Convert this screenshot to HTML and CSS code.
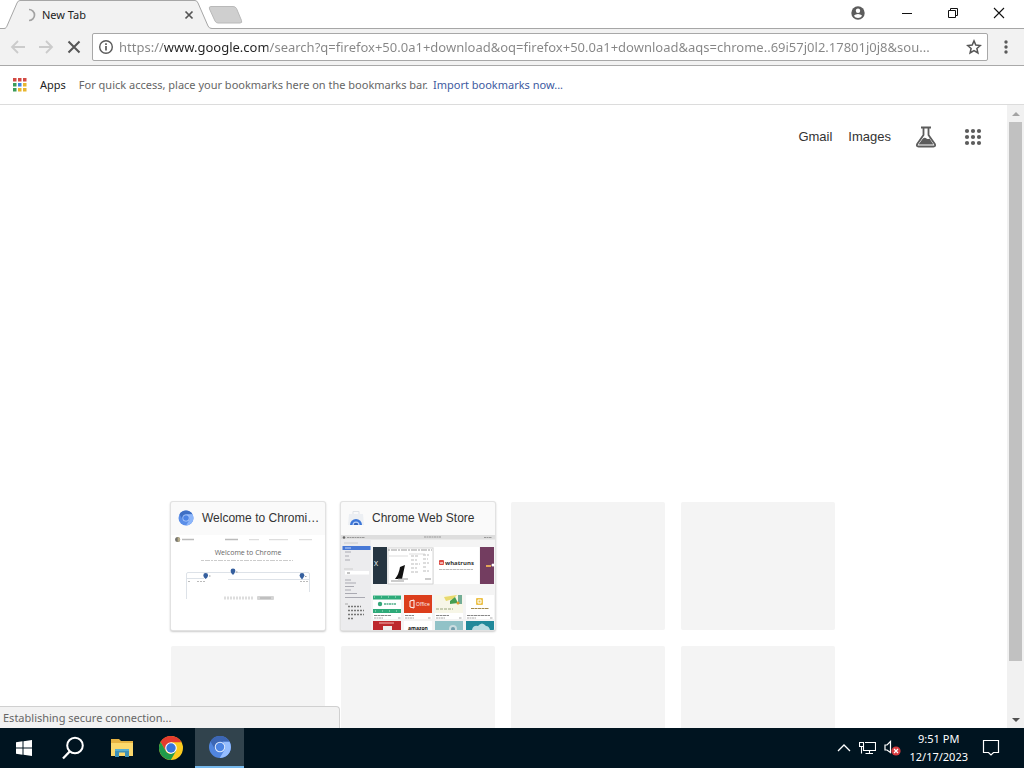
FILE: index.html
```html
<!DOCTYPE html>
<html lang="en">
<head>
<meta charset="utf-8">
<title>New Tab</title>
<link rel="stylesheet" href="styles.css">
</head>
<body>
<header class="tabstrip">
  <div class="tab">
    <svg class="tab-shape" width="208" height="29" viewBox="0 0 208 29" aria-hidden="true"><path d="M0 28.5C2 28.5 2.500 27 3 26L13 3Q14 .5 16 .5H191Q193 .5 194 3L204 26Q205 28.500 208 28.500V29H0Z" fill="#f2f2f2"/><path d="M0 28.500C2 28.500 2.500 27 3 26L13 3Q14 .5 16 .5H191Q193 .5 194 3L204 26Q205 28.500 208 28.500" fill="none" stroke="#a6a6a6"/></svg>
    <svg class="spinner" width="14" height="14" viewBox="0 0 14 14" aria-hidden="true"><path d="M6 1.500A5.500 5.500 0 0 1 6 12.500" fill="none" stroke="#a3a3a3" stroke-width="1.700"/></svg>
    <span class="tab-title">New Tab</span>
    <button class="plain tab-close" aria-label="Close tab"><svg width="10" height="10" viewBox="0 0 10 10"><path d="M1.500 1.500l7 7M8.500 1.500l-7 7" stroke="#555" stroke-width="1.700"/></svg></button>
  </div>
  <button class="plain new-tab" aria-label="New tab"><svg width="36" height="18" viewBox="0 0 36 18"><path d="M3 .5H25Q27.500 .5 28.500 2.500L33.500 14.500Q34.500 17 32 17H10Q8 17 7 15L1.500 3Q.5 .5 3 .5Z" fill="#cfcfcf" stroke="#b9b9b9"/></svg></button>
  <div class="window-controls">
    <button class="plain profile" aria-label="Profile"><svg width="14" height="14" viewBox="0 0 14 14"><circle cx="7" cy="7" r="6.700" fill="#5c5c5c"/><circle cx="7" cy="4.700" r="2.200" fill="#fff"/><path d="M2.800 9.700Q4.500 8 7 8T11.200 9.700Q9.700 12 7 12T2.800 9.700Z" fill="#fff"/></svg></button>
    <button class="plain control" aria-label="Minimize"><svg width="12" height="12" viewBox="0 0 12 12"><path d="M1 6.500H11" stroke="#111"/></svg></button>
    <button class="plain control" aria-label="Restore"><svg width="12" height="12" viewBox="0 0 12 12"><path d="M1.500 3.500H8.500V10.500H1.500ZM3.500 3.500V1.500H10.500V8.500H8.500" fill="none" stroke="#111"/></svg></button>
    <button class="plain control" aria-label="Close"><svg width="12" height="12" viewBox="0 0 12 12"><path d="M1 1L11 11M11 1L1 11" stroke="#111" stroke-width="1.100"/></svg></button>
  </div>
</header>

<nav class="toolbar" aria-label="Navigation">
  <button class="plain nav" aria-label="Back"><svg width="16" height="16" viewBox="0 0 16 16"><path d="M15 8H2.500M8 2L2 8L8 14" fill="none" stroke="#cbcbcb" stroke-width="1.800"/></svg></button>
  <button class="plain nav" aria-label="Forward"><svg width="16" height="16" viewBox="0 0 16 16"><path d="M1 8H13.500M8 2L14 8L8 14" fill="none" stroke="#cbcbcb" stroke-width="1.800"/></svg></button>
  <button class="plain nav" aria-label="Stop"><svg width="16" height="16" viewBox="0 0 16 16"><path d="M2.500 2.500L13.500 13.500M13.500 2.500L2.500 13.500" stroke="#555" stroke-width="2"/></svg></button>
  <div class="omnibox">
    <button class="plain" aria-label="Site information"><svg width="16" height="16" viewBox="0 0 16 16"><circle cx="8" cy="8" r="6.300" fill="none" stroke="#5a5a5a" stroke-width="1.400"/><path d="M8 7V11.500M8 4.300V6" stroke="#5a5a5a" stroke-width="1.700"/></svg></button>
    <input class="url" type="text" aria-label="Address" value="https://www.google.com/search?q=firefox+50.0a1+download&amp;oq=firefox+50.0a1+download&amp;aqs=chrome..69i57j0l2.17801j0j8&amp;sou...">
    <button class="plain" aria-label="Bookmark this page"><svg width="16" height="16" viewBox="0 0 16 16"><path d="M8 1.900L9.800 6.100L14.300 6.500L10.900 9.500L11.900 14L8 11.600L4.100 14L5.100 9.500L1.700 6.500L6.200 6.100Z" fill="none" stroke="#555" stroke-width="1.500"/></svg></button>
  </div>
  <button class="plain menu" aria-label="Menu"><svg width="4" height="14" viewBox="0 0 4 14"><g fill="#5a5a5a"><circle cx="2" cy="2" r="1.700"/><circle cx="2" cy="7" r="1.700"/><circle cx="2" cy="12" r="1.700"/></g></svg></button>
</nav>

<nav class="bookmarks" aria-label="Bookmarks">
  <a class="apps" href="#apps"><svg width="14" height="14" viewBox="0 0 14 14" aria-hidden="true"><path d="M0 0h3.500v3.500h-3.500zM5 0h3.500v3.500h-3.500zM10 0h3.500v3.500h-3.500z" fill="#d34a43"/><path d="M0 5h3.500v3.500h-3.500zM0 10h3.500v3.500h-3.500z" fill="#3b9b59"/><path d="M5 5h3.500v3.500h-3.500z" fill="#3f83dd"/><path d="M10 5h3.500v3.500h-3.500zM5 10h3.500v3.500h-3.500zM10 10h3.500v3.500h-3.500z" fill="#e8b52e"/></svg><span>Apps</span></a>
  <span class="hint">For quick access, place your bookmarks here on the bookmarks bar.</span>
  <a class="import" href="#import">Import bookmarks now...</a>
</nav>

<div class="viewport">
  <main class="page">
    <div class="google-bar">
      <a href="#gmail">Gmail</a>
      <a href="#images">Images</a>
      <button class="plain labs" aria-label="Labs"><svg width="22" height="22" viewBox="0 0 22 22"><path d="M6 1.500H16M8.500 2V9L2.200 18Q1 20.500 3.500 20.500H18.500Q21 20.500 19.800 18L13.500 9V2" fill="none" stroke="#5c5c5c" stroke-width="1.800"/><path d="M7.500 13Q9.500 11 11.500 12.500Q13 13.500 14.500 12.500L18.500 18.500H3.500Z" fill="#5c5c5c"/></svg></button>
      <button class="plain" aria-label="Google apps"><svg width="18" height="18" viewBox="0 0 18 18"><g fill="#5c5c5c"><circle cx="3" cy="3" r="2.100"/><circle cx="9" cy="3" r="2.100"/><circle cx="15" cy="3" r="2.100"/><circle cx="3" cy="9" r="2.100"/><circle cx="9" cy="9" r="2.100"/><circle cx="15" cy="9" r="2.100"/><circle cx="3" cy="15" r="2.100"/><circle cx="9" cy="15" r="2.100"/><circle cx="15" cy="15" r="2.100"/></g></svg></button>
    </div>
    <div class="tiles">
      <a class="tile site" href="#welcome">
        <span class="tile-head"><svg width="16" height="16" viewBox="0 0 16 16" aria-hidden="true"><circle cx="8" cy="8" r="7.500" fill="#5a8ee8"/><path d="M1.500 4.300A7.500 7.500 0 0 1 14.500 4.300H8A4 4 0 0 0 4.500 9.500Z" fill="#3e6fc4"/><path d="M14.500 4.300A7.500 7.500 0 0 1 8 15.500L11.500 9.800Q12.300 6 8 4.300Z" fill="#8db6fa"/><circle cx="8" cy="8" r="3.500" fill="#b5cffb"/><circle cx="8" cy="8" r="2.800" fill="#4b83e4"/></svg><span class="tile-title">Welcome to Chromi…</span></span>
        <svg class="thumb" viewBox="0 0 154 95" aria-hidden="true">
          <rect width="154" height="95" fill="#fff"/>
          <circle cx="6.600" cy="4.600" r="2.500" fill="#74736d"/><path d="M6.600 2.100A2.500 2.500 0 0 1 6.600 7.100Z" fill="#b7ad8a"/>
          <path d="M11 4.600H23" stroke="#bbb" stroke-width="1.500"/><path d="M54 4.600H67" stroke="#bbb" stroke-width="1.500"/><path d="M78 4.600H88M98 4.600H117M128 4.600H141" stroke="#ddd" stroke-width="1.300"/>
          <text x="77" y="20" text-anchor="middle" font-size="7" fill="#666">Welcome to Chrome</text>
          <path d="M30 25.500H122" stroke="#ccc" stroke-width="1" stroke-dasharray="3 1 5 1 2 1"/>
          <path d="M15.500 64V39Q15.500 37.500 17 37.500H60M64 37.500H137Q138.500 37.500 138.500 39V57M15.500 43.500H33M57 44.500H138" fill="none" stroke="#dde2e8"/>
          <path d="M17 46.500H20M26 46.500H34M129 46.500H137" stroke="#bbb" stroke-dasharray="2 1"/>
          <g fill="#355f9e"><path d="M32.300 40.500a2.400 2.400 0 1 1 4.800 0Q37 42 34.700 44Q32.300 42 32.300 40.500Z"/><path d="M59.600 36a2.400 2.400 0 1 1 4.800 0Q64 38 62 40Q59.600 38 59.600 36Z"/><path d="M128.600 40.500a2.400 2.400 0 1 1 4.800 0Q133 42 131 44.500Q128.600 42 128.600 40.500Z"/></g>
          <path d="M38 41H39.500M65 37H66.500M134 41.500H135.500" stroke="#999"/>
          <path d="M53 63H83" stroke="#ddd" stroke-width="3" stroke-dasharray="2 1"/><rect x="86" y="61" width="17" height="4" rx="1" fill="#d5d5d5"/><path d="M89 63H100" stroke="#aaa"/>
        </svg>
      </a>
      <a class="tile site" href="#store">
        <span class="tile-head"><svg width="16" height="16" viewBox="0 0 16 16" aria-hidden="true"><path d="M1 4H15L16 15H0Z" fill="#eceff3"/><path d="M5 4V1.500H11V4" fill="none" stroke="#dfe3e8"/><path d="M2 15A6 6 0 0 1 14 15Z" fill="#3c76d8"/><path d="M4.500 15A3.500 3.500 0 0 1 11.500 15Z" fill="#bed4fa"/><path d="M5.700 15A2.300 2.300 0 0 1 10.300 15Z" fill="#3264bd"/></svg><span class="tile-title">Chrome Web Store</span></span>
        <svg class="thumb" viewBox="0 0 154 95" aria-hidden="true">
          <rect width="154" height="95" fill="#f4f4f4"/><rect width="154" height="4.500" fill="#dedede"/>
          <circle cx="3" cy="2.500" r="1.300" fill="#666"/><path d="M6 2.500H24M83 2H100M143 2.500H151" stroke="#999" stroke-dasharray="2 .5"/>
          <rect y="4.500" width="30" height="90.500" fill="#ececee"/><path d="M3 8H17M3 34H12" stroke="#ccc"/>
          <rect x="1.500" y="11" width="28" height="4" fill="#4778d6"/><path d="M4 13H10" stroke="#c4d6fb"/>
          <path d="M4 17H10M4 21H8M4 25H9M4 45H10" stroke="#aaaab2"/><rect x="4" y="36" width="24" height="3.500" fill="#fff"/><path d="M6 38H9" stroke="#888"/>
          <path d="M4 48H15M4 51.500H13M4 55H10M4 58.500H16M4 62.500H24" stroke="#aaaab2"/><path d="M4 69H7" stroke="#aaa"/>
          <path d="M7 71.500H20M7 75.500H23M7 79.500H23M7 83.500H12" stroke="#777" stroke-width="1.500" stroke-dasharray="2 1"/>
          <rect x="32" y="12" width="14" height="37" fill="#263541"/><text x="33" y="31" font-size="7" fill="#fff">X</text>
          <rect x="47" y="13" width="45" height="36" fill="#fff" stroke="#c7c7c7" stroke-width=".7"/><path d="M47 15H91" stroke="#999" stroke-dasharray="2 1 6 1"/><path d="M48 21H67M68 19H84" stroke="#ddd"/>
          <path d="M70 21H78M70 25H76M70 29H79M70 33H76M70 37H78M82 20H88M82 24H87M82 28H88M82 32H86M82 36H88" stroke="#bbb" stroke-dasharray="3 1"/>
          <path d="M59 32L64 30L61 44H54Q58 39 59 32Z" fill="#111"/><path d="M57 44H67M50 46H63M84 44H90" stroke="#999"/>
          <rect x="93" y="12" width="45" height="37" fill="#fff"/><rect x="98" y="25" width="5" height="5" rx="1" fill="#db4740"/><path d="M99 27L100 29L101 27L102 29" fill="none" stroke="#fff" stroke-width=".7"/><text x="104" y="30" font-size="6" font-weight="700" fill="#333">whatruns</text><path d="M98 34.500H132" stroke="#bbb" stroke-dasharray="3 .5"/>
          <rect x="139" y="12" width="14" height="37" fill="#733d60"/><path d="M145 31H150" stroke="#e2a457" stroke-width="2"/><circle cx="152" cy="30" r="1.500" fill="#fff"/>
          <g fill="#fff"><rect x="32" y="60" width="28" height="24"/><rect x="63" y="60" width="28" height="24"/><rect x="94" y="60" width="28" height="24"/><rect x="125" y="60" width="28" height="24"/></g>
          <path d="M32 62.500H60M32 76H60" stroke="#2eaa79" stroke-width="4"/><path d="M33 62H59M34 76H60" stroke="#b3e5ce" stroke-dasharray="1 6"/><circle cx="39" cy="69" r="2.200" fill="#35a77a"/><path d="M43 69H55" stroke="#4fae88" stroke-width="1.500" stroke-dasharray="2 .5"/>
          <rect x="63" y="60" width="28" height="18" fill="#dc3e1c"/><path d="M69 66L73 65V73L69 72Z" fill="none" stroke="#fff"/><text x="75" y="71" font-size="5" fill="#fff">Office</text>
          <rect x="94" y="60" width="28" height="18" fill="#f7f6e7"/><path d="M103 62L116 60L112 64L105 66Z" fill="#e8d96d"/><path d="M109 69V66L114 62L117 68Z" fill="#459e52"/><rect x="117" y="60" width="4" height="9" fill="#73ad96"/><path d="M95 74H112" stroke="#9aa67d" stroke-dasharray="3 1"/><circle cx="117" cy="68" r="1.500" fill="#e49b2c"/>
          <rect x="135" y="63" width="7" height="7" rx="1" fill="#edc24b"/><path d="M137 65H140V68H137Z" fill="none" stroke="#fff"/><path d="M130 73.500H148" stroke="#a48a4a" stroke-dasharray="3 .5"/>
          <path d="M33 80.500H50M64 80.500H73M95 80.500H108M126 80.500H149" stroke="#888" stroke-dasharray="3 .5"/><path d="M33 83H42M57 83H60M64 83H73M87 83H90M95 83H104M118 83H121M126 83H135M149 83H152" stroke="#aaa" stroke-dasharray="2 .5"/>
          <rect x="32" y="86" width="28" height="9" fill="#bd292d"/><path d="M38 88H53" stroke="#f3b5b0"/><rect x="42" y="91" width="9" height="4" fill="#eee"/>
          <rect x="63" y="86" width="28" height="9" fill="#fff"/><text x="67" y="95" font-size="5" font-weight="700" fill="#111">amazon</text>
          <rect x="94" y="86" width="28" height="9" fill="#91c2c7"/><circle cx="112" cy="94" r="4" fill="#cbdde0"/><circle cx="112" cy="94" r="2" fill="#719dac"/>
          <rect x="125" y="86" width="28" height="9" fill="#21899a"/><path d="M131 95Q132 90 137 91Q141 86 145 91Q148 91 149 95Z" fill="#badce1"/>
        </svg>
      </a>
      <div class="tile"></div><div class="tile"></div><div class="tile"></div><div class="tile"></div><div class="tile"></div><div class="tile"></div>
    </div>
  </main>
  <div class="scrollbar">
    <button class="plain arrow" aria-label="Scroll up"><svg width="8" height="4" viewBox="0 0 8 4"><path d="M4 0L8 4H0Z" fill="#a3a3a3"/></svg></button>
    <div class="track"><div class="scroll-thumb"></div></div>
    <button class="plain arrow" aria-label="Scroll down"><svg width="8" height="4" viewBox="0 0 8 4"><path d="M0 0H8L4 4Z" fill="#505050"/></svg></button>
  </div>
  <div class="status" role="status">Establishing secure connection...</div>
</div>

<footer class="taskbar">
  <button class="plain task" aria-label="Start"><svg width="16" height="16" viewBox="0 0 16 16"><path d="M0 2.300L6.500 1.300V7.500H0ZM7.500 1.200L16 0V7.500H7.500ZM0 8.500H6.500V14.700L0 13.800ZM7.500 8.500H16V16L7.500 14.800Z" fill="#fff"/></svg></button>
  <button class="plain task" aria-label="Search"><svg width="24" height="24" viewBox="0 0 24 24"><circle cx="14" cy="9.500" r="7.800" fill="none" stroke="#fff" stroke-width="2"/><path d="M8.700 15.500L2 22.500" stroke="#fff" stroke-width="2.300"/></svg></button>
  <button class="plain task" aria-label="File Explorer"><svg width="22" height="20" viewBox="0 0 22 20"><path d="M0 1H8L10 3H22V18H0Z" fill="#e6b342"/><path d="M0 5H22V18H0Z" fill="#fbd86c"/><path d="M4 19V11H18V19H14V14.500H8V19Z" fill="#3d91b8"/><path d="M4 11H18V13H4Z" fill="#56add0"/></svg></button>
  <button class="plain task" aria-label="Chrome"><svg width="24" height="24" viewBox="0 0 24 24"><circle cx="12" cy="12" r="12" fill="#fbcb1f"/><path d="M1.600 6A12 12 0 0 1 22.400 6.200H12L6.800 15Z" fill="#e53b2e"/><path d="M1.600 6A12 12 0 0 0 11.800 24L17.200 14.800L12 18Q8 17.500 6.800 15Z" fill="#209b4b"/><circle cx="12" cy="12" r="5.800" fill="#fff"/><circle cx="12" cy="12" r="4.700" fill="#3876db"/></svg></button>
  <button class="plain task active" aria-label="Chromium"><svg width="22" height="22" viewBox="0 0 24 24"><circle cx="12" cy="12" r="12" fill="#5085df"/><path d="M1.600 6A12 12 0 0 1 22.400 6.200H12L6.800 15Z" fill="#3c66b4"/><path d="M22.400 6.200A12 12 0 0 1 11.800 24L17.200 14.800Q19 10 15 6.200Z" fill="#95bdff"/><circle cx="12" cy="12" r="5.800" fill="#dce8fc"/><circle cx="12" cy="12" r="4.600" fill="#4b83e2"/></svg></button>
  <div class="tray">
    <button class="plain" aria-label="Show hidden icons"><svg width="14" height="8" viewBox="0 0 14 8"><path d="M1 7L7 1L13 7" fill="none" stroke="#fff" stroke-width="1.300"/></svg></button>
    <button class="plain" aria-label="Network"><svg width="17" height="14" viewBox="0 0 17 14"><path d="M6 1.500H16.500V9.500H4.500V6M.5 1.500H4.500V5.500H.5ZM2.500 5.500V12.500M10.500 9.500V12.500M6.500 12.500H14" fill="none" stroke="#fff" stroke-width="1.100"/></svg></button>
    <button class="plain" aria-label="Volume muted"><svg width="17" height="16" viewBox="0 0 17 16"><path d="M1 5H3L6.500 1.500V12.500L3 10H1Z" fill="none" stroke="#fff" stroke-width="1.200"/><circle cx="12" cy="11" r="4.600" fill="#d83b3f"/><path d="M10 9L14 13M14 9L10 13" stroke="#fff" stroke-width="1.200"/></svg></button>
    <div class="clock"><time>9:51 PM</time><time>12/17/2023</time></div>
    <button class="plain" aria-label="Notifications"><svg width="18" height="18" viewBox="0 0 18 18"><path d="M1.500 1.500H16.500V13.500H11.500L9 16L6.500 13.500H1.500Z" fill="none" stroke="#fff" stroke-width="1.200"/></svg></button>
  </div>
</footer>
</body>
</html>
```
FILE: styles.css
```css
* { box-sizing: border-box; }

body {
  margin: 0;
  height: 100vh;
  display: flex;
  flex-direction: column;
  overflow: hidden;
  background: #fff;
  font: 11px/16px "Noto Sans", "Open Sans", sans-serif;
  color: #222;
}

svg { display: block; flex: none; }
a { color: inherit; text-decoration: none; }

.plain {
  display: flex;
  align-items: center;
  justify-content: center;
  flex: none;
  padding: 0;
  border: 0;
  background: none;
}

.tabstrip {
  flex: none;
  height: 29px;
  display: flex;
  border-bottom: 1px solid #a6a6a6;
  padding-left: 4px;
}

.tab {
  position: relative;
  width: 204px;
  height: 29px;
  display: flex;
  align-items: center;
  padding: 0 14px 0 19px;
}

.tab-shape { position: absolute; left: 0; top: 0; }
.spinner, .tab-title, .tab-close { position: relative; }
.tab-title { margin-left: 5px; }
.tab-close { margin-left: auto; }

.new-tab { height: 30px; }

.window-controls { margin-left: auto; display: flex; height: 26px; padding-right: 2px; }
.profile { width: 52px; }
.control { width: 46px; }

.toolbar {
  flex: none;
  height: 37px;
  display: flex;
  align-items: center;
  padding-left: 4px;
  background: #f2f2f2;
  border-bottom: 1px solid #a9a9a9;
}

.nav { width: 28px; height: 28px; }

.omnibox {
  flex: 1;
  min-width: 0;
  height: 28px;
  margin-left: 4px;
  display: flex;
  align-items: center;
  gap: 5px;
  padding: 0 5px;
  border: 1px solid #a8a8a8;
  border-radius: 2px;
  background: #fff;
}

.url {
  flex: 1;
  min-width: 0;
  height: 24px;
  padding: 0;
  border: 0;
  outline: 0;
  font: 13px/20px "Noto Sans", "Open Sans", sans-serif;
  color: transparent;
  background: linear-gradient(90deg, #858585 0 45px, #222 45px 149px, #858585 149px);
  background-clip: text;
  -webkit-background-clip: text;
}

.menu { width: 36px; height: 28px; }

.bookmarks {
  flex: none;
  height: 39px;
  display: flex;
  align-items: center;
  padding-left: 13px;
  border-bottom: 1px solid #dcdcdc;
}

.apps { display: flex; align-items: center; gap: 13px; }
.hint { margin-left: 13px; color: #666; }
.import { margin-left: 5px; color: #3d5a9f; }

.viewport { position: relative; flex: 1; min-height: 0; display: flex; }

.page {
  flex: 1;
  min-width: 0;
  overflow: hidden;
  display: flex;
  flex-direction: column;
  font-family: "Liberation Sans", Arial, sans-serif;
}

.google-bar {
  flex: none;
  height: 64px;
  display: flex;
  align-items: center;
  justify-content: flex-end;
  gap: 16px;
  padding-right: 25px;
  font-size: 13px;
  color: #333;
}

.labs { margin: 0 11px 0 8px; }

.tiles {
  flex: none;
  margin-top: 333px;
  padding-right: 1px;
  display: grid;
  grid-template-columns: repeat(4, 154px);
  justify-content: center;
  gap: 16px;
}

.tile { height: 128px; background: #f4f4f4; border-radius: 2px; overflow: hidden; }
.site { background: #fafafa; box-shadow: 0 0 0 1px #e2e2e2, 0 1px 2px 1px #ccc; }

.tile-head {
  display: flex;
  align-items: center;
  gap: 8px;
  height: 33px;
  padding: 0 6px 2px 7px;
  font-size: 12px;
  color: #333;
}

.tile-title { white-space: nowrap; }
.thumb { width: 100%; font-family: "Open Sans", sans-serif; }

.scrollbar {
  flex: none;
  width: 17px;
  display: flex;
  flex-direction: column;
  background: #f1f1f1;
}

.arrow { height: 17px; }
.track { flex: 1; padding: 0 2px 50px; display: flex; }
.scroll-thumb { flex: 1; background: #c1c1c1; }

.status {
  position: absolute;
  left: 0;
  bottom: 0;
  width: 340px;
  height: 22px;
  padding: 3px;
  border: 1px solid #d0d0d0;
  border-width: 1px 1px 0 0;
  border-radius: 0 4px 0 0;
  background: #f2f2f2;
  color: #666;
}

.taskbar {
  flex: none;
  height: 40px;
  display: flex;
  background: #001420;
  color: #fff;
}

.task { width: 49px; }
.task:first-child { width: 48px; }
.active { background: #31434d; border-bottom: 2px solid #76b9ed; }

.tray { margin-left: auto; display: flex; align-items: center; gap: 8px; padding-right: 24px; }
.clock { display: flex; flex-direction: column; align-items: center; line-height: 18px; margin-right: 6px; }
```
